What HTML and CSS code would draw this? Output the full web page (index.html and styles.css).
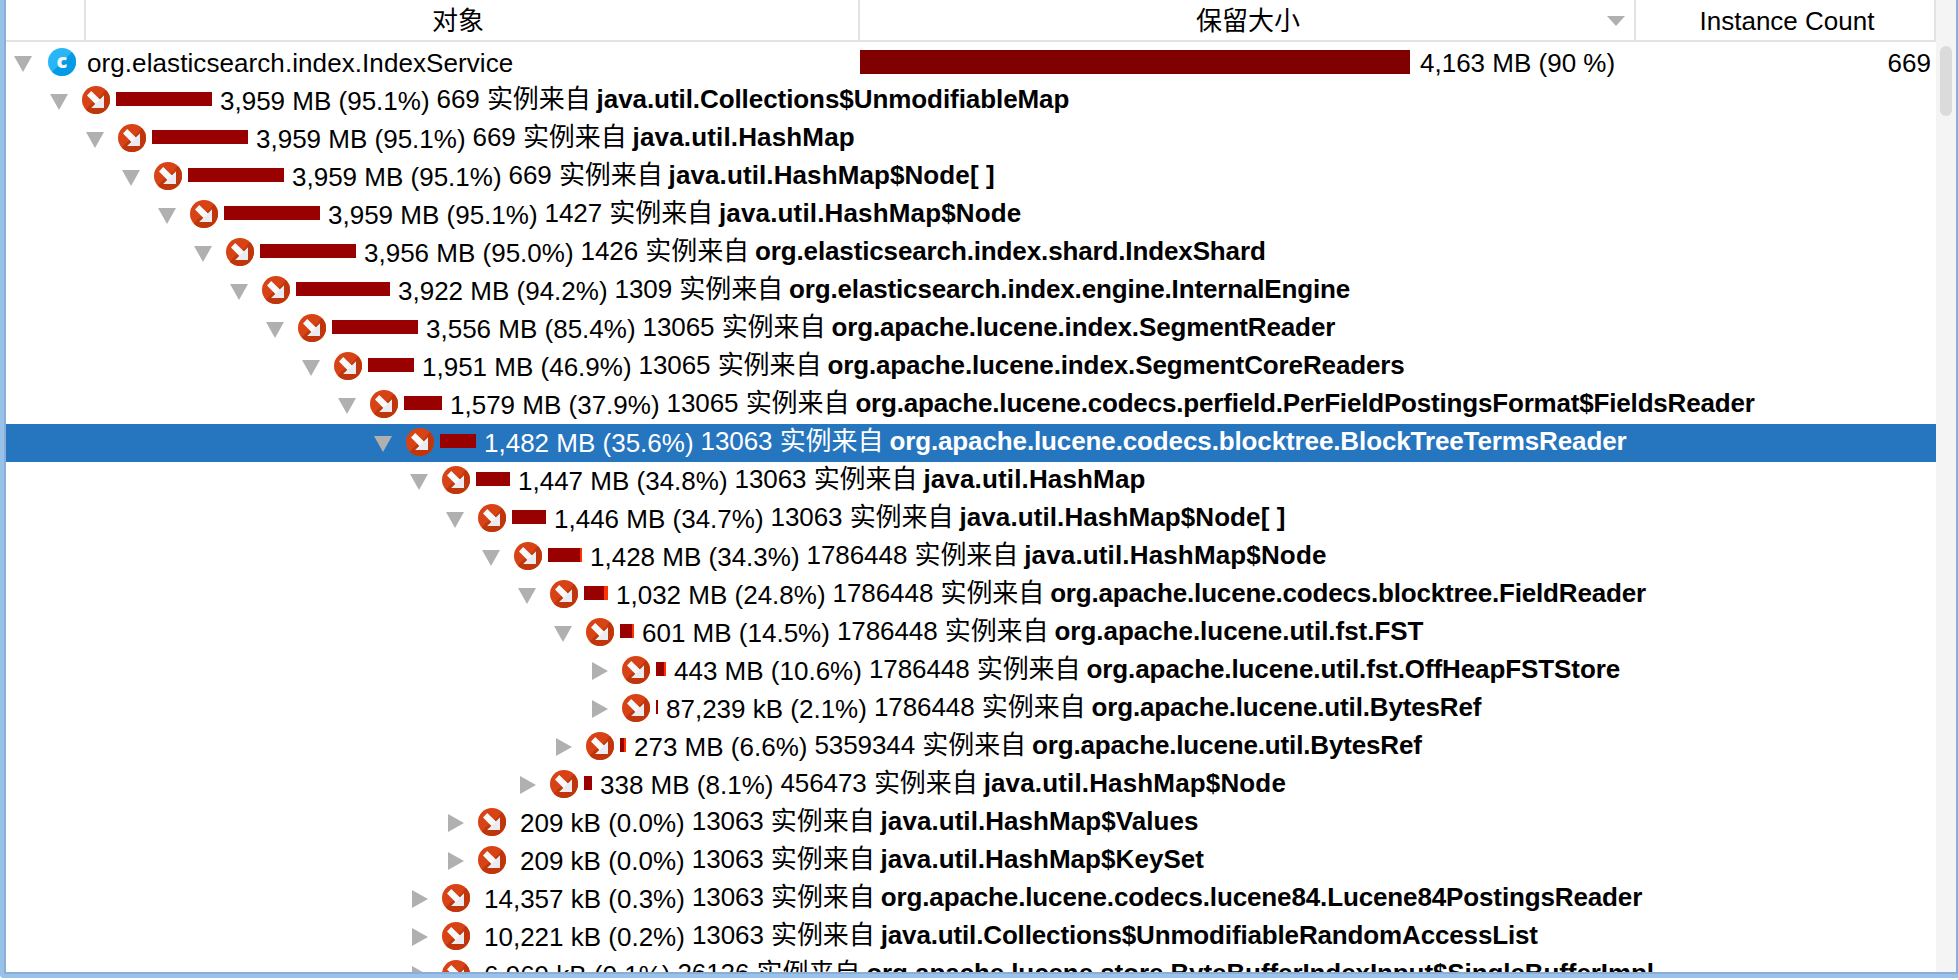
FILE: index.html
```html
<!DOCTYPE html>
<html lang="zh">
<head>
<meta charset="utf-8">
<title>Heap Walker</title>
<link rel="stylesheet" href="styles.css">
</head>
<body>
<svg class="defs" width="0" height="0">
  <defs>
    <clipPath id="disc"><circle cx="14" cy="14" r="14"/></clipPath>
    <g id="ref">
      <circle cx="14" cy="14" r="14" fill="#d84315"/>
      <path clip-path="url(#disc)" d="M0 28 L8 19 L20 9 L23.5 4 L28 0 V28 Z" fill="#bf360c"/>
      <path d="M9.2 5 L18 13.4 L22 9.4 V22 H9.4 L13.4 18 L5 9.4 Z" fill="#fafafa"/>
      <path d="M22 9.4 V22 H9.4 Z" fill="#ececf0"/>
    </g>
    <g id="open"><path d="M0 0 H18 L9 16 Z" fill="#b0b0b0"/></g>
    <g id="closed"><path d="M0 0 L16 9 L0 18 Z" fill="#b0b0b0"/></g>
  </defs>
</svg>
<div class="window">
  <div class="table">
    <div class="head">
      <div class="th th-icon"></div>
      <div class="th th-object">对象</div>
      <div class="th th-size">保留大小<svg class="sort" width="18" height="10"><path d="M0 0 H18 L9 10 Z" fill="#b0b0b0"/></svg></div>
      <div class="th th-count">Instance Count</div>
    </div>
    <div class="rows" id="rows">
      <div class="row root">
        <svg class="tri" width="18" height="18"><use href="#open" y="0"/></svg>
        <svg class="icon" width="28" height="28" viewBox="0 0 28 28"><circle cx="14" cy="14" r="14" fill="#29b6f6"/><path clip-path="url(#disc)" d="M24 4 L28 0 V28 H0 L4 24 Z" fill="#039be5"/><text class="letter" x="14" y="20">c</text></svg>
        <span class="name">org.elasticsearch.index.IndexService</span>
        <span class="bigbar"></span>
        <span class="total">4,163 MB (90 %)</span>
        <span class="count">669</span>
      </div>
    </div>
  </div>
  <div class="track"><div class="thumb"></div></div>
</div>
<script src="tree.js"></script>
</body>
</html>
```
FILE: styles.css
```css
body {
  margin: 0;
  background: #fff;
  color: #000;
  font: 26px/38px "Liberation Sans", "Noto Sans CJK SC", sans-serif;
  overflow: hidden;
}
.defs { position: absolute; }
.window {
  box-sizing: border-box;
  display: flex;
  width: 1958px;
  height: 978px;
  border: solid #99c2eb;
  border-width: 0 0 4px 4px;
  border-radius: 0 0 0 4px;
}
.table {
  width: 1930px;
  height: 972px;
  overflow: hidden;
  border-left: 2px solid #8aaed6;
  border-bottom: 2px solid #8aaed6;
}
.track {
  box-sizing: border-box;
  width: 22px;
  height: 974px;
  padding: 46px 0 0 4px;
  background: #f4f4f4;
  border-right: 2px solid #8aaed6;
  border-bottom: 2px solid #8aaed6;
}
.thumb { width: 12px; height: 70px; border-radius: 6px; background: #dbdbdb; }
.head { display: flex; height: 40px; border-bottom: 2px solid #e3e3e3; margin-bottom: 2px; }
.th {
  box-sizing: border-box;
  border-right: 2px solid #e3e3e3;
  text-align: center;
  line-height: 42px;
  white-space: nowrap;
}
.th-icon { width: 80px; }
.th-object { width: 774px; padding-right: 28px; }
.th-size { width: 776px; position: relative; padding-left: 2px; }
.th-count { width: 300px; padding-left: 4px; }
.sort { position: absolute; right: 9px; top: 16px; }
.row { display: flex; height: 38px; white-space: pre; }
.selected { background: #2675bf; color: #fff; }
.tri { flex: none; width: 18px; height: 18px; margin: 12px 14px 0 8px; }
.tri-closed { margin: 10px 14px 0 10px; width: 16px; }
.icon { flex: none; margin: 4px 6px 0 0; }
.bar { flex: none; height: 14px; margin-top: 10px; background: #990000; }
.hot { flex: none; height: 14px; margin-top: 10px; background: #ff3300; }
.value { margin-left: 8px; line-height: 38px; }
.inst { margin-left: 7px; line-height: 34px; letter-spacing: -0.07px; }
.cls { margin-left: 6px; font-weight: bold; line-height: 35px; }
.root { line-height: 38px; }
.root .icon { margin-left: 2px; }
.letter { font: 800 20px "Open Sans", sans-serif; fill: #f5f5f5; text-anchor: middle; }
.name { width: 773px; margin-left: 5px; letter-spacing: 0.08px; }
.bigbar { flex: none; width: 550px; height: 24px; margin-top: 6px; background: #800000; }
.total { margin-left: 10px; }
.count { margin-left: auto; margin-right: 5px; }
```
FILE: tree.js
```js
// level, bar width, hot width, value, instances, class name, open, tracking
const nodes = [
  [1, 96, 0, "3,959 MB (95.1%)", "669", "java.util.Collections$UnmodifiableMap", 1, -0.07],
  [2, 96, 0, "3,959 MB (95.1%)", "669", "java.util.HashMap", 1, 0.15],
  [3, 96, 0, "3,959 MB (95.1%)", "669", "java.util.HashMap$Node[ ]", 1, 0.1],
  [4, 96, 0, "3,959 MB (95.1%)", "1427", "java.util.HashMap$Node", 1, 0.15],
  [5, 96, 0, "3,956 MB (95.0%)", "1426", "org.elasticsearch.index.shard.IndexShard", 1, -0.13],
  [6, 94, 0, "3,922 MB (94.2%)", "1309", "org.elasticsearch.index.engine.InternalEngine", 1, -0.15],
  [7, 86, 0, "3,556 MB (85.4%)", "13065", "org.apache.lucene.index.SegmentReader", 1, -0.13],
  [8, 46, 0, "1,951 MB (46.9%)", "13065", "org.apache.lucene.index.SegmentCoreReaders", 1, -0.12],
  [9, 38, 0, "1,579 MB (37.9%)", "13065", "org.apache.lucene.codecs.perfield.PerFieldPostingsFormat$FieldsReader", 1, -0.18],
  [10, 36, 0, "1,482 MB (35.6%)", "13063", "org.apache.lucene.codecs.blocktree.BlockTreeTermsReader", 1, -0.12],
  [11, 34, 0, "1,447 MB (34.8%)", "13063", "java.util.HashMap", 1, 0.15],
  [12, 34, 0, "1,446 MB (34.7%)", "13063", "java.util.HashMap$Node[ ]", 1, 0.1],
  [13, 32, 2, "1,428 MB (34.3%)", "1786448", "java.util.HashMap$Node", 1, 0.15],
  [14, 20, 4, "1,032 MB (24.8%)", "1786448", "org.apache.lucene.codecs.blocktree.FieldReader", 1, -0.18],
  [15, 12, 2, "601 MB (14.5%)", "1786448", "org.apache.lucene.util.fst.FST", 1, -0.03],
  [16, 8, 2, "443 MB (10.6%)", "1786448", "org.apache.lucene.util.fst.OffHeapFSTStore", 0, -0.09],
  [16, 2, 0, "87,239 kB (2.1%)", "1786448", "org.apache.lucene.util.BytesRef", 0, -0.15],
  [15, 4, 2, "273 MB (6.6%)", "5359344", "org.apache.lucene.util.BytesRef", 0, -0.15],
  [14, 8, 0, "338 MB (8.1%)", "456473", "java.util.HashMap$Node", 0, 0.15],
  [12, 0, 0, "209 kB (0.0%)", "13063", "java.util.HashMap$Values", 0, 0.06],
  [12, 0, 0, "209 kB (0.0%)", "13063", "java.util.HashMap$KeySet", 0, 0.05],
  [11, 0, 0, "14,357 kB (0.3%)", "13063", "org.apache.lucene.codecs.lucene84.Lucene84PostingsReader", 0, -0.13],
  [11, 0, 0, "10,221 kB (0.2%)", "13063", "java.util.Collections$UnmodifiableRandomAccessList", 0, -0.15],
  [11, 0, 0, "6,969 kB (0.1%)", "26126", "org.apache.lucene.store.ByteBufferIndexInput$SingleBufferImpl", 0, -0.09]
];
document.getElementById("rows").insertAdjacentHTML("beforeend", nodes.map(
  ([level, bar, hot, value, count, name, open, tracking]) => `<div class="row${level === 10 ? " selected" : ""}" style="padding-left:${level * 36}px">` +
    `<svg class="tri${open ? "" : " tri-closed"}"><use href="#${open ? "open" : "closed"}"/></svg>` +
    `<svg class="icon" width="28" height="28"><use href="#ref"/></svg>` +
    `<span class="bar" style="width:${bar}px"></span><span class="hot" style="width:${hot}px"></span>` +
    `<span class="value">${value}</span><span class="inst">${count} 实例来自</span><span class="cls" style="letter-spacing:${tracking}px">${name}</span></div>`
).join(""));
```
